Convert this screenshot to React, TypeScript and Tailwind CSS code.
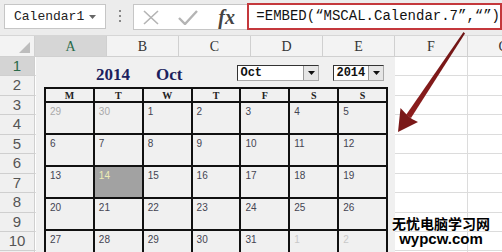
import React from "react";

const COLS = [
  { label: "A", w: 72 },
  { label: "B", w: 72 },
  { label: "C", w: 72 },
  { label: "D", w: 72 },
  { label: "E", w: 72 },
  { label: "F", w: 73 },
  { label: "G", w: 72 },
];

const ROW_HEIGHTS = [19, 20, 19, 20, 19, 20, 19, 20, 19, 19, 19];

const WEEKDAYS = ["M", "T", "W", "T", "F", "S", "S"];

type Day = { n: number; muted?: boolean; faint?: boolean; selected?: boolean };

const WEEKS: Day[][] = [
  [{ n: 29, muted: true }, { n: 30, muted: true }, { n: 1 }, { n: 2 }, { n: 3 }, { n: 4 }, { n: 5 }],
  [{ n: 6 }, { n: 7 }, { n: 8 }, { n: 9 }, { n: 10 }, { n: 11 }, { n: 12 }],
  [{ n: 13 }, { n: 14, selected: true }, { n: 15 }, { n: 16 }, { n: 17 }, { n: 18 }, { n: 19 }],
  [{ n: 20 }, { n: 21 }, { n: 22 }, { n: 23 }, { n: 24 }, { n: 25 }, { n: 26 }],
  [{ n: 27 }, { n: 28 }, { n: 29 }, { n: 30 }, { n: 31 }, { n: 1, faint: true }, { n: 2, faint: true }],
];

function DropButton() {
  return (
    <div className="flex h-full w-[15px] items-center justify-center border-l border-[#9a9a9a] bg-[#e6e6e6]">
      <svg width="7" height="4" viewBox="0 0 7 4">
        <path d="M0 0h7L3.5 4z" fill="#111" />
      </svg>
    </div>
  );
}

function FormulaBar() {
  return (
    <div className="flex h-[35px] items-start bg-[#ececec] pt-[4px]">
      {/* name box */}
      <div className="ml-[4px] flex h-[25px] w-[106px] items-center justify-between border border-[#c6c6c6] bg-white pl-[9px] pr-[9px]">
        <span className="text-[13px] text-[#222]" style={{ fontFamily: '"Liberation Mono", monospace' }}>
          Calendar1
        </span>
        <svg width="7" height="4" viewBox="0 0 7 4">
          <path d="M0 0h7L3.5 4z" fill="#666" />
        </svg>
      </div>

      {/* separator */}
      <div className="flex w-[29px] justify-center pt-[6px]">
        <div className="flex flex-col gap-[3px]">
          <div className="h-[2px] w-[2px] bg-[#888]" />
          <div className="h-[2px] w-[2px] bg-[#888]" />
          <div className="h-[2px] w-[2px] bg-[#888]" />
        </div>
      </div>

      {/* cancel / enter / fx */}
      <div className="flex h-[26px] flex-1 items-center border border-r-0 border-[#c6c6c6] bg-white">
        <div className="flex w-[113px] items-center">
          <svg className="ml-[9px]" width="16" height="15" viewBox="0 0 16 15">
            <path d="M1 1l14 13M15 1L1 14" stroke="#b4b4b4" strokeWidth="1.6" fill="none" />
          </svg>
          <svg className="ml-[19px]" width="20" height="15" viewBox="0 0 20 15">
            <path d="M1 8l6 6L19 1" stroke="#b4b4b4" strokeWidth="2.4" fill="none" />
          </svg>
          <span
            className="ml-[20px] text-[20px] font-bold italic leading-none text-[#444]"
            style={{ fontFamily: '"Liberation Serif", serif' }}
          >
            fx
          </span>
        </div>
        <div className="-mt-[2px] flex h-[27px] flex-1 items-center border-2 border-[#c4383c] bg-white pl-[7px]">
          <span className="whitespace-nowrap text-[14px] text-[#111]" style={{ fontFamily: '"Liberation Mono", monospace' }}>
            =EMBED(“MSCAL.Calendar.7”,“”)
          </span>
        </div>
      </div>
    </div>
  );
}

function ColumnHeaders() {
  return (
    <div className="flex h-[22px] border-t border-[#d6d6d6] bg-[#f3f3f3]">
      <div className="relative w-[35px] shrink-0 border-r border-b border-[#d0d0d0]">
        <svg className="absolute bottom-[3px] right-[4px]" width="11" height="11" viewBox="0 0 11 11">
          <path d="M11 0v11H0z" fill="#bdbdbd" />
        </svg>
      </div>
      {COLS.map((c, i) => (
        <div
          key={c.label}
          className={
            "flex shrink-0 items-center justify-center border-r border-b border-[#d0d0d0] text-[14px] " +
            (i === 0 ? "bg-[#d6d6d6] text-[#2a6b4a]" : "text-[#333]")
          }
          style={{ width: c.w, fontFamily: '"Liberation Serif", serif' }}
        >
          {c.label}
        </div>
      ))}
    </div>
  );
}

function Sheet() {
  return (
    <div className="flex flex-col">
      {ROW_HEIGHTS.map((h, r) => (
        <div key={r} className="flex" style={{ height: h }}>
          <div
            className={
              "flex w-[35px] shrink-0 items-center justify-center border-r border-b border-[#cfcfcf] text-[15px] " +
              (r === 0 ? "bg-[#d4d4d4] text-[#2a6b4a]" : "bg-[#f0f0f0] text-[#555]")
            }
            style={{ fontFamily: '"Liberation Sans", sans-serif' }}
          >
            {r + 1}
          </div>
          {COLS.map((c) => (
            <div key={c.label} className="shrink-0 border-r border-b border-[#dcdcdc] bg-white" style={{ width: c.w }} />
          ))}
        </div>
      ))}
    </div>
  );
}

function Calendar() {
  return (
    <div className="absolute left-[36px] top-[57px] h-[200px] w-[359px] bg-[#f0f0f0]">
      {/* title row */}
      <div className="flex h-[30px] items-start">
        <div
          className="ml-[60px] mt-[5px] flex gap-[26px] text-[17px] font-bold text-[#1c1f5e]"
          style={{ fontFamily: '"Liberation Serif", serif' }}
        >
          <span>2014</span>
          <span>Oct</span>
        </div>
        <div
          className="ml-[55px] mt-[8px] flex h-[16px] w-[82px] items-stretch border border-t-[#333] border-l-[#333] border-r-[#aaa] border-b-[#aaa] bg-white text-[12px] font-bold text-[#111]"
          style={{ fontFamily: '"Liberation Mono", monospace' }}
        >
          <span className="flex-1 pl-[2px] leading-[14px]">Oct</span>
          <DropButton />
        </div>
        <div
          className="ml-[14px] mt-[8px] flex h-[16px] w-[51px] items-stretch border border-t-[#333] border-l-[#333] border-r-[#aaa] border-b-[#aaa] bg-white text-[12px] font-bold text-[#111]"
          style={{ fontFamily: '"Liberation Mono", monospace' }}
        >
          <span className="flex-1 pl-[2px] leading-[14px]">2014</span>
          <DropButton />
        </div>
      </div>

      {/* grid */}
      <div className="ml-[8px] w-[344px] border-l-2 border-t-2 border-[#111]">
        <div className="flex h-[14px]">
          {WEEKDAYS.map((d, i) => (
            <div
              key={i}
              className="flex w-[49px] items-center justify-center border-r-2 border-b-2 border-[#111] text-[10px] font-bold text-[#222]"
              style={{ fontFamily: '"Liberation Serif", serif' }}
            >
              {d}
            </div>
          ))}
        </div>
        {WEEKS.map((week, w) => (
          <div key={w} className="flex h-[32px]">
            {week.map((d, i) => (
              <div
                key={i}
                className={
                  "w-[49px] border-r-2 border-b-2 border-[#111] pl-[4px] pt-[3px] text-[10px] leading-[12px] " +
                  (d.selected
                    ? "bg-[#a2a2a2] text-[#ecebb4]"
                    : d.faint
                    ? "text-[#c8c8c8]"
                    : d.muted
                    ? "text-[#a9a9a9]"
                    : "text-[#444452]")
                }
                style={{ fontFamily: '"Liberation Sans", sans-serif' }}
              >
                {d.n}
              </div>
            ))}
          </div>
        ))}
      </div>
    </div>
  );
}

function Arrow() {
  return (
    <svg className="pointer-events-none absolute left-0 top-0" width="502" height="252" viewBox="0 0 502 252">
      <defs>
        <linearGradient id="ar" x1="0" y1="0" x2="0" y2="1">
          <stop offset="0" stopColor="#6e1414" />
          <stop offset="1" stopColor="#8e1e1e" />
        </linearGradient>
      </defs>
      <path d="M463.5 32 L465 33.5 L411 118 L406 115 Z" fill="url(#ar)" />
      <path d="M398 132 L400.5 108 L407 115 L412 119 L418 122 Z" fill="#7a1818" />
    </svg>
  );
}

export default function App() {
  return (
    <div className="relative h-[252px] w-[502px] overflow-hidden bg-white">
      <FormulaBar />
      <ColumnHeaders />
      <Sheet />
      <Calendar />
      <Arrow />
      <div className="absolute left-[392px] top-[216px] flex flex-col items-center leading-none text-black">
        <span
          className="text-[14px] font-bold"
          style={{ fontFamily: '"Noto Sans CJK SC", sans-serif', textShadow: "0 0 2px #fff" }}
        >
          无忧电脑学习网
        </span>
        <span
          className="mt-[1px] text-[15px] font-bold"
          style={{ fontFamily: '"Liberation Sans", sans-serif', textShadow: "0 0 2px #fff" }}
        >
          wypcw.com
        </span>
      </div>
    </div>
  );
}
